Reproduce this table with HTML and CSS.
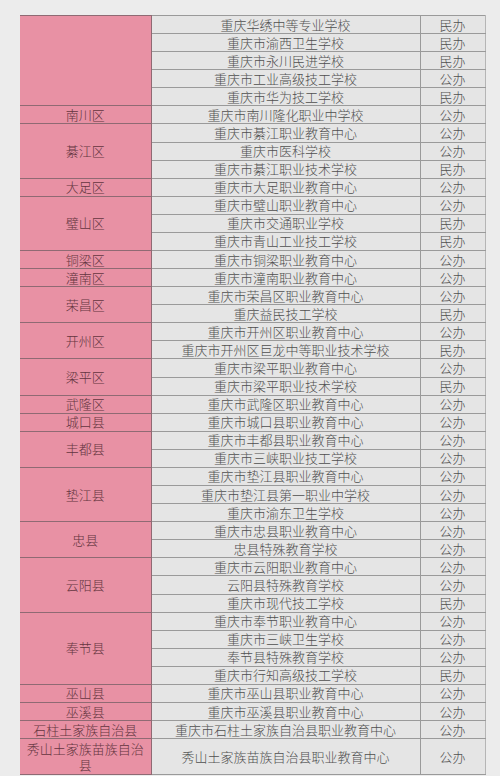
FILE: index.html
```html
<!DOCTYPE html>
<html lang="zh-CN">
<head>
<meta charset="utf-8">
<link rel="stylesheet" href="styles.css">
</head>
<body>
<table class="schools">
<colgroup><col class="c-dist"><col class="c-name"><col class="c-type"></colgroup>
<tbody>
<tr><td class="dist" rowspan="5"></td><td class="name">重庆华绣中等专业学校</td><td class="type">民办</td></tr>
<tr><td class="name">重庆市渝西卫生学校</td><td class="type">民办</td></tr>
<tr><td class="name">重庆市永川民进学校</td><td class="type">民办</td></tr>
<tr><td class="name">重庆市工业高级技工学校</td><td class="type">公办</td></tr>
<tr><td class="name">重庆市华为技工学校</td><td class="type">民办</td></tr>
<tr><td class="dist">南川区</td><td class="name">重庆市南川隆化职业中学校</td><td class="type">公办</td></tr>
<tr><td class="dist" rowspan="3">綦江区</td><td class="name">重庆市綦江职业教育中心</td><td class="type">公办</td></tr>
<tr><td class="name">重庆市医科学校</td><td class="type">公办</td></tr>
<tr><td class="name">重庆市綦江职业技术学校</td><td class="type">民办</td></tr>
<tr><td class="dist">大足区</td><td class="name">重庆市大足职业教育中心</td><td class="type">公办</td></tr>
<tr><td class="dist" rowspan="3">璧山区</td><td class="name">重庆市璧山职业教育中心</td><td class="type">公办</td></tr>
<tr><td class="name">重庆市交通职业学校</td><td class="type">民办</td></tr>
<tr><td class="name">重庆市青山工业技工学校</td><td class="type">民办</td></tr>
<tr><td class="dist">铜梁区</td><td class="name">重庆市铜梁职业教育中心</td><td class="type">公办</td></tr>
<tr><td class="dist">潼南区</td><td class="name">重庆市潼南职业教育中心</td><td class="type">公办</td></tr>
<tr><td class="dist" rowspan="2">荣昌区</td><td class="name">重庆市荣昌区职业教育中心</td><td class="type">公办</td></tr>
<tr><td class="name">重庆益民技工学校</td><td class="type">民办</td></tr>
<tr><td class="dist" rowspan="2">开州区</td><td class="name">重庆市开州区职业教育中心</td><td class="type">公办</td></tr>
<tr><td class="name">重庆市开州区巨龙中等职业技术学校</td><td class="type">民办</td></tr>
<tr><td class="dist" rowspan="2">梁平区</td><td class="name">重庆市梁平职业教育中心</td><td class="type">公办</td></tr>
<tr><td class="name">重庆市梁平职业技术学校</td><td class="type">民办</td></tr>
<tr><td class="dist">武隆区</td><td class="name">重庆市武隆区职业教育中心</td><td class="type">公办</td></tr>
<tr><td class="dist">城口县</td><td class="name">重庆市城口县职业教育中心</td><td class="type">公办</td></tr>
<tr><td class="dist" rowspan="2">丰都县</td><td class="name">重庆市丰都县职业教育中心</td><td class="type">公办</td></tr>
<tr><td class="name">重庆市三峡职业技工学校</td><td class="type">公办</td></tr>
<tr><td class="dist" rowspan="3">垫江县</td><td class="name">重庆市垫江县职业教育中心</td><td class="type">公办</td></tr>
<tr><td class="name">重庆市垫江县第一职业中学校</td><td class="type">公办</td></tr>
<tr><td class="name">重庆市渝东卫生学校</td><td class="type">公办</td></tr>
<tr><td class="dist" rowspan="2">忠县</td><td class="name">重庆市忠县职业教育中心</td><td class="type">公办</td></tr>
<tr><td class="name">忠县特殊教育学校</td><td class="type">公办</td></tr>
<tr><td class="dist" rowspan="3">云阳县</td><td class="name">重庆市云阳职业教育中心</td><td class="type">公办</td></tr>
<tr><td class="name">云阳县特殊教育学校</td><td class="type">公办</td></tr>
<tr><td class="name">重庆市现代技工学校</td><td class="type">民办</td></tr>
<tr><td class="dist" rowspan="4">奉节县</td><td class="name">重庆市奉节职业教育中心</td><td class="type">公办</td></tr>
<tr><td class="name">重庆市三峡卫生学校</td><td class="type">公办</td></tr>
<tr><td class="name">奉节县特殊教育学校</td><td class="type">公办</td></tr>
<tr><td class="name">重庆市行知高级技工学校</td><td class="type">民办</td></tr>
<tr><td class="dist">巫山县</td><td class="name">重庆市巫山县职业教育中心</td><td class="type">公办</td></tr>
<tr><td class="dist">巫溪县</td><td class="name">重庆市巫溪县职业教育中心</td><td class="type">公办</td></tr>
<tr><td class="dist">石柱土家族自治县</td><td class="name">重庆市石柱土家族自治县职业教育中心</td><td class="type">公办</td></tr>
<tr class="tall"><td class="dist">秀山土家族苗族自治县</td><td class="name">秀山土家族苗族自治县职业教育中心</td><td class="type">公办</td></tr>
</tbody>
</table>
</body>
</html>
```

FILE: styles.css
```css
html, body {
  margin: 0;
  padding: 0;
  background: #ececec;
}
body {
  padding: 15px 0 0 20px;
  font-family: "Noto Sans CJK SC", "Noto Sans", sans-serif;
  font-size: 13px;
  font-weight: 300;
}
.schools {
  border-collapse: collapse;
  table-layout: fixed;
  width: 465px;
}
.c-dist { width: 131px; }
.c-name { width: 269px; }
.c-type { width: 65px; }
.schools tr { height: 18.08px; }
.schools tr.tall { height: 36px; }
.schools td {
  padding: 0 4px;
  text-align: center;
  vertical-align: middle;
  line-height: 16px;
  border: 1px solid #9a9a9a;
  background: #e5e5e5;
  color: #505050;
  white-space: normal;
  overflow: hidden;
}
.schools td.dist {
  background: #e891a4;
  color: #643540;
  border-color: #8f6a73;
  border-left: none;
}
.schools td.name {
  border-left: 1px solid #6d6d6d;
}
.schools td.type {
  border-left: 1px solid #6a6a6a;
  border-right: 1px solid #b5b5b5;
}
```
